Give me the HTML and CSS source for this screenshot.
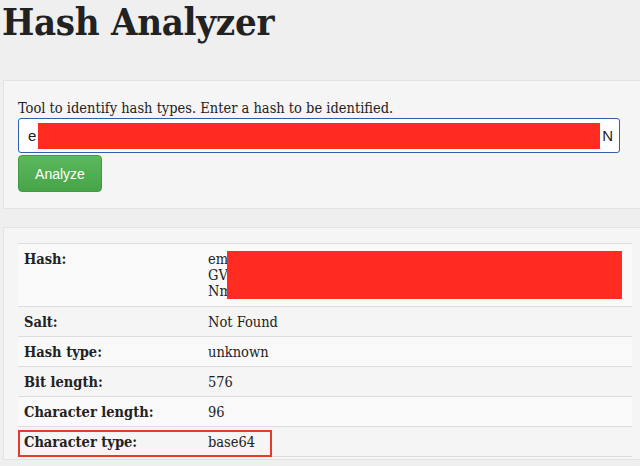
FILE: index.html
```html
<!DOCTYPE html>
<html>
<head>
<meta charset="utf-8">
<link rel="stylesheet" href="styles.css">
</head>
<body>
<h1 class="title">Hash Analyzer</h1>
<div class="well">
  <p class="intro">Tool to identify hash types. Enter a hash to be identified.</p>
  <div class="input">
    <span class="in-start">e</span>
    <span class="redact redact-input"></span>
    <span class="in-end">N</span>
  </div>
  <button class="btn">Analyze</button>
</div>
<div class="well results">
  <table class="table">
    <tr class="odd hashrow"><th>Hash:</th><td><div class="hashval">em<br>GV<br>Nm<span class="redact redact-hash"></span></div></td></tr>
    <tr><th>Salt:</th><td>Not Found</td></tr>
    <tr class="odd"><th>Hash type:</th><td>unknown</td></tr>
    <tr><th>Bit length:</th><td>576</td></tr>
    <tr class="odd"><th>Character length:</th><td>96</td></tr>
    <tr class="hl"><th>Character type:</th><td>base64</td></tr>
  </table>
</div>
</body>
</html>
```
FILE: styles.css
```css
html, body { margin: 0; padding: 0; }
body {
  background: #efefef;
  font-family: "DejaVu Serif", serif;
  font-stretch: condensed;
  color: #222;
  width: 640px;
  height: 466px;
  overflow: hidden;
}
.title {
  margin: 0;
  padding: 0 0 0 2px;
  height: 80px;
  font-family: "DejaVu Serif", serif;
  font-stretch: condensed;
  font-weight: bold;
  font-size: 38px;
  line-height: 44px;
  color: #222;
  letter-spacing: -0.3px;
}
.well {
  margin-left: 3px;
  width: 660px;
  box-sizing: border-box;
  background: #f5f5f5;
  border: 1px solid #e3e3e3;
  padding: 17px 0 16px 14px;
}
.intro {
  margin: 0;
  font-size: 14.5px;
  line-height: 20px;
}
.input {
  width: 602px;
  height: 35px;
  box-sizing: border-box;
  border: 1px solid #2f5fa8;
  border-radius: 3px;
  background: #fff;
  display: flex;
  align-items: center;
  font-family: "Liberation Sans", sans-serif;
  font-stretch: normal;
  font-size: 15px;
  color: #222;
  padding-left: 9px;
}
.redact { background: #ff2a20; display: block; }
.redact-input { width: 562px; height: 26px; margin-left: 2px; }
.in-end { margin-left: 2px; }
.btn {
  margin-top: 2px;
  display: block;
  width: 84px;
  height: 37px;
  border: 1px solid #3f9a42;
  border-radius: 4px;
  background: linear-gradient(#5cb85c, #48a448);
  color: #fff;
  font-family: "Liberation Sans", sans-serif;
  font-size: 14px;
  padding: 0;
}
.results {
  margin-top: 18px;
  padding: 15px 0 2px 14px;
}
.table {
  width: 614px;
  border-collapse: collapse;
  font-size: 14.5px;
  line-height: 16px;
}
.table th, .table td {
  text-align: left;
  vertical-align: top;
  padding: 7px 6px 6px 6px;
  border-top: 1px solid #dddddd;
}
.table tr.hashrow th, .table tr.hashrow td { padding-bottom: 7px; }
.table tr:last-child th, .table tr:last-child td { border-bottom: 1px solid #dddddd; }
.table th { width: 172px; font-weight: bold; }
.table tr.odd { background: #f9f9f9; }
.hashval { position: relative; }
.redact-hash {
  position: absolute;
  left: 19px; top: 0;
  width: 395px; height: 48px;
}
.table tr.hl th { position: relative; }
.table tr.hl th::after {
  content: "";
  position: absolute;
  left: 0; top: 3px;
  width: 254px; height: 27px;
  box-sizing: border-box;
  border: 2px solid #e8392c;
}
```
